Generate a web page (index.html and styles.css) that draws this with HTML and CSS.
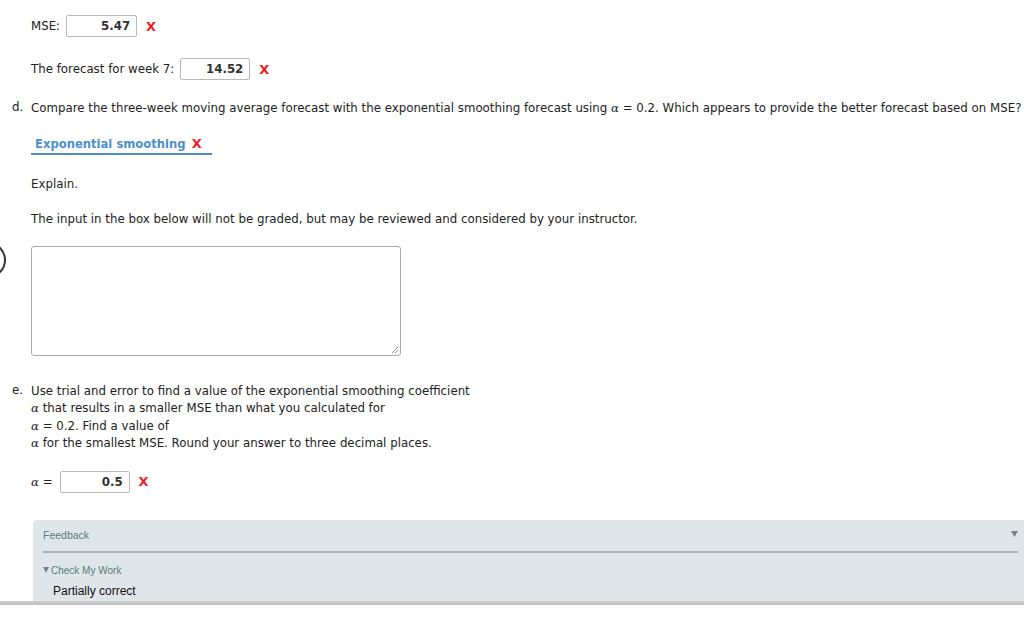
FILE: index.html
```html
<!DOCTYPE html>
<html>
<head>
<meta charset="utf-8">
<link rel="stylesheet" href="styles.css">
</head>
<body>
<div class="circle-edge"><svg width="12" height="40" viewBox="0 0 12 40"><circle cx="-12" cy="17" r="17" fill="none" stroke="#333" stroke-width="2"/></svg></div>
<div class="page">
  <div class="row r-mse">
    <span class="lbl">MSE:</span>
    <span class="box w72">5.47</span>
    <span class="wrong">X</span>
  </div>
  <div class="row r-week">
    <span class="lbl wk">The forecast for week 7:</span>
    <span class="box w70">14.52</span>
    <span class="wrong">X</span>
  </div>
  <div class="item r-d">
    <span class="mark">d.</span>
    <span class="txt nowrap">Compare the three-week moving average forecast with the exponential smoothing forecast using <i class="al">α</i> = 0.2. Which appears to provide the better forecast based on MSE?</span>
  </div>
  <div class="indent r-drop">
    <span class="drop">Exponential smoothing <span class="wrong">X</span></span>
  </div>
  <p class="indent r-explain">Explain.</p>
  <p class="indent r-note">The input in the box below will not be graded, but may be reviewed and considered by your instructor.</p>
  <div class="indent r-ta"><div class="ta"><svg class="grip" width="8" height="8" viewBox="0 0 8 8"><path d="M7 1L1 7M7 4L4 7" stroke="#999" stroke-width="1"/></svg></div></div>
  <div class="item r-e">
    <span class="mark">e.</span>
    <span class="txt">Use trial and error to find a value of the exponential smoothing coefficient<br><i class="al">α</i> that results in a smaller MSE than what you calculated for<br><i class="al">α</i> = 0.2. Find a value of<br><i class="al">α</i> for the smallest MSE. Round your answer to three decimal places.</span>
  </div>
  <div class="row indent r-alpha">
    <span class="lbl"><i class="al">α</i> =</span>
    <span class="box w70">0.5</span>
    <span class="wrong">X</span>
  </div>
  <div class="feedback">
    <div class="fb-head"><span>Feedback</span><svg class="tri" width="7" height="6" viewBox="0 0 7 6"><path d="M0 0H7L3.5 6Z" fill="#808080"/></svg></div>
    <div class="fb-body">
      <div class="cmw"><svg class="tri2" width="6" height="6" viewBox="0 0 6 6"><path d="M0 0H6L3 6Z" fill="#808080"/></svg>Check My Work</div>
      <div class="partial">Partially correct</div>
    </div>
  </div>
</div>
<div class="bottom-bar"></div>
</body>
</html>
```

FILE: styles.css
```css
html, body { margin: 0; padding: 0; background: #fff; }
body { width: 1024px; height: 622px; overflow: hidden; position: relative;
  font-family: Verdana, "DejaVu Sans", sans-serif; font-size: 11.8px; color: #222; }
.page { padding-left: 12px; }
.circle-edge { position: absolute; left: 0; top: 243px; }
.row { display: flex; align-items: center; }
.lbl { margin-right: 6px; }
.wk { margin-right: 6px; }
.box { display: inline-block; box-sizing: border-box; height: 22px; line-height: 20px;
  border: 1px solid #b9b9b9; border-radius: 2px; text-align: right; padding-right: 6px;
  font-weight: bold; color: #333; }
.w72 { width: 71px; }
.w70 { width: 70px; }
.wrong { color: #ee1c1c; font-weight: bold; font-size: 13px; margin-left: 9px; }
.r-mse { margin-left: 19px; padding-top: 15px; height: 22px; }
.r-week { margin-left: 19px; margin-top: 21px; height: 22px; }
.item { display: flex; }
.mark { width: 19px; flex: none; }
.txt { line-height: 17.6px; }
.nowrap { white-space: nowrap; }
.al { font-family: "DejaVu Serif", serif; font-style: italic; }
.r-d { margin-top: 20px; }
.indent { margin-left: 19px; }
.r-drop { margin-top: 18px; }
.drop { display: inline-block; width: 181px; box-sizing: border-box; padding-left: 4px; white-space: nowrap;
  border-bottom: 2px solid #4d8fc9; padding-bottom: 2px; color: #4d8fc9; font-weight: bold; font-size: 11.6px; }
.drop .wrong { margin-left: 2px; }
p { margin: 0; }
.r-explain { margin-top: 22px; }
.r-note { margin-top: 21px; }
.r-ta { margin-top: 20px; }
.ta { width: 370px; height: 110px; box-sizing: border-box; border: 1px solid #a9a9a9; border-radius: 3px; position: relative; }
.grip { position: absolute; right: 1px; bottom: 1px; }
.r-e { margin-top: 27px; }
.r-alpha { margin-top: 18px; height: 22px; }
.r-alpha .lbl { margin-right: 7px; }
.feedback { margin-left: 21px; margin-top: 27px; background: #dfe6e9; border-radius: 4px 0 0 0;
  font-family: "Liberation Sans", Arial, sans-serif; }
.fb-head { display: flex; justify-content: space-between; align-items: flex-start; margin: 0 6px 0 10px; padding-top: 9px; height: 22px;
  border-bottom: 2px solid #a9b2b6; font-size: 10.5px; color: #5b7c7d; }
.tri { margin-top: 2px; }
.fb-body { padding: 12px 0 2px 10px; height: 40px; }
.cmw { font-size: 10px; color: #5b7c7d; display: flex; align-items: center; }
.tri2 { margin-right: 2px; }
.partial { font-size: 12px; color: #111; margin-top: 8px; padding-left: 10px; }
.bottom-bar { position: absolute; left: 0; top: 601px; width: 1024px; height: 21px;
  background: linear-gradient(#d0d0d0, #bdbdbd 4px, #fff 4px); }
```
